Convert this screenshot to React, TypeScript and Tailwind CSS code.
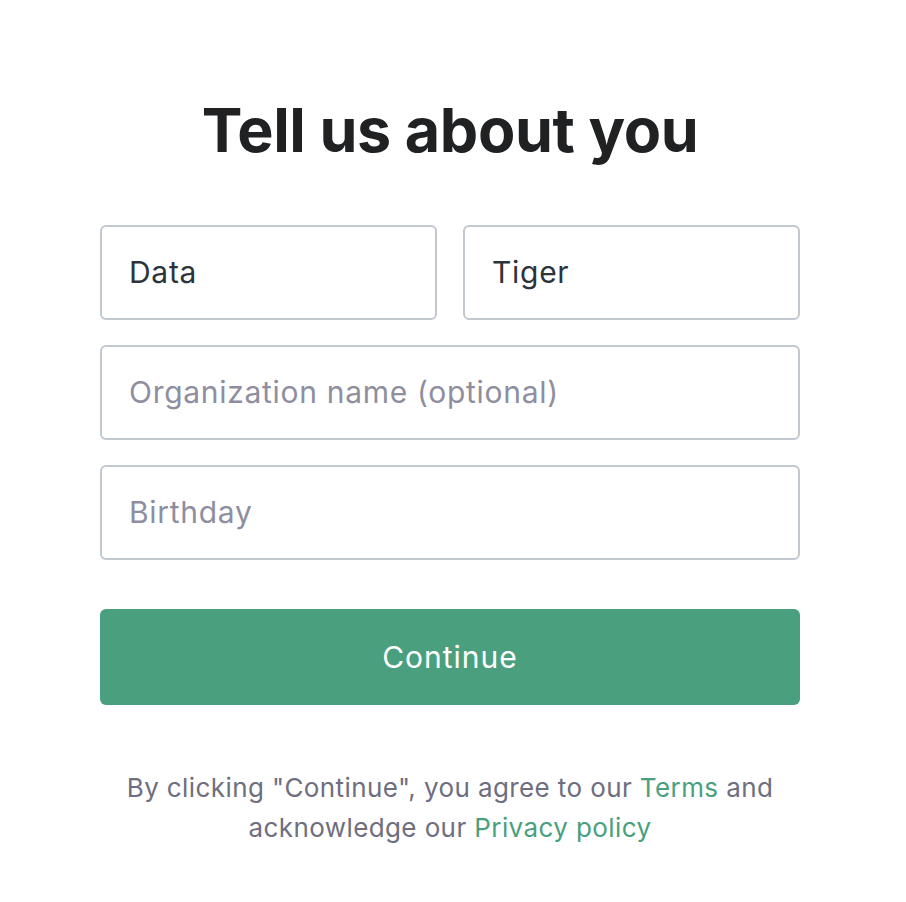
export default function App() {
  const font = { fontFamily: 'Inter, "Noto Sans", sans-serif' };
  return (
    <div className="min-h-[902px] w-full bg-white" style={font}>
      <div className="ml-[100px] w-[700px] pt-[92px]">
        <h1 className="text-center text-[61px] font-bold leading-[76px] tracking-[-0.4px] text-[#202123]">
          Tell us about you
        </h1>
        <div className="mt-[57px] flex flex-col gap-[25px]">
          <div className="flex gap-[26px]">
            <div className="flex h-[95px] flex-1 items-center rounded-[6px] border-2 border-[#c2c8d0] px-[27px] text-[30px] tracking-[0.7px] text-[#2d333a]">
              Data
            </div>
            <div className="flex h-[95px] flex-1 items-center rounded-[6px] border-2 border-[#c2c8d0] px-[27px] text-[30px] tracking-[0.7px] text-[#2d333a]">
              Tiger
            </div>
          </div>
          <div className="flex h-[95px] items-center rounded-[6px] border-2 border-[#c2c8d0] px-[27px] text-[30px] tracking-[0.7px] text-[#8e8ea0]">
            Organization name (optional)
          </div>
          <div className="flex h-[95px] items-center rounded-[6px] border-2 border-[#c2c8d0] px-[27px] text-[30px] tracking-[0.7px] text-[#8e8ea0]">
            Birthday
          </div>
        </div>
        <button className="mt-[49px] flex h-[96px] w-full items-center justify-center rounded-[6px] bg-[#4a9f7e] text-[30px] tracking-[1px] text-white">
          Continue
        </button>
        <p className="mt-[63px] text-center text-[26px] leading-[40px] tracking-[0.4px] text-[#6e6e80]">
          By clicking "Continue", you agree to our <span className="text-[#4a9f7e]">Terms</span> and
          <br />
          acknowledge our <span className="text-[#4a9f7e]">Privacy policy</span>
        </p>
      </div>
    </div>
  );
}
